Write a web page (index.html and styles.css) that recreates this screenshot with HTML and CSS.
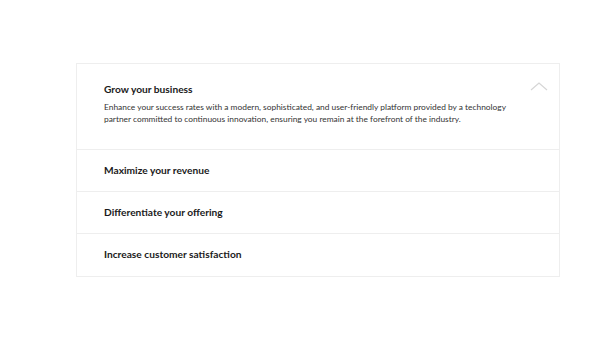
FILE: index.html
```html
<!DOCTYPE html>
<html lang="en">
<head>
  <meta charset="UTF-8" />
  <title>Benefits</title>
  <link rel="stylesheet" href="styles.css">
</head>
<body>

<!-- Accordion -->
<section class="accordion">
  <div class="item open">
    <div class="item-head">
      <h3>Grow your business</h3>
      <svg class="chevron" width="18" height="9" viewBox="0 0 18 9">
        <polyline points="1,8 9,1 17,8" fill="none" stroke="#d6d6d6" stroke-width="1.2" />
      </svg>
    </div>
    <p>Enhance your success rates with a modern, sophisticated, and user-friendly platform provided by a technology partner committed to continuous innovation, ensuring you remain at the forefront of the industry.</p>
  </div>
  <div class="item">
    <div class="item-head"><h3>Maximize your revenue</h3></div>
  </div>
  <div class="item">
    <div class="item-head"><h3>Differentiate your offering</h3></div>
  </div>
  <div class="item last">
    <div class="item-head"><h3>Increase customer satisfaction</h3></div>
  </div>
</section>

</body>
</html>
```

FILE: styles.css
```css
body {
  margin: 0;
  background: #fff;
  font-family: Lato, "Open Sans", sans-serif;
  color: #1a1a1a;
}
.accordion {
  width: 482px;
  margin: 63px 0 0 76px;
  border: 1px solid #eeeeee;
}
.item {
  border-top: 1px solid #eeeeee;
  padding: 13px 27px 14px;
}
.item:first-child {
  border-top: none;
}
.item.open {
  padding-top: 18px;
  padding-bottom: 24px;
}
.item.last {
  padding-bottom: 15px;
}
.item-head {
  display: flex;
  justify-content: space-between;
  align-items: flex-start;
}
.item h3 {
  margin: 0;
  font-size: 10.2px;
  line-height: 14px;
  font-weight: 700;
}
.chevron {
  margin-right: -16px;
}
.item p {
  max-width: 412px;
  margin: 5px 0 0;
  font-size: 8.4px;
  line-height: 12px;
  color: #333;
}
```
